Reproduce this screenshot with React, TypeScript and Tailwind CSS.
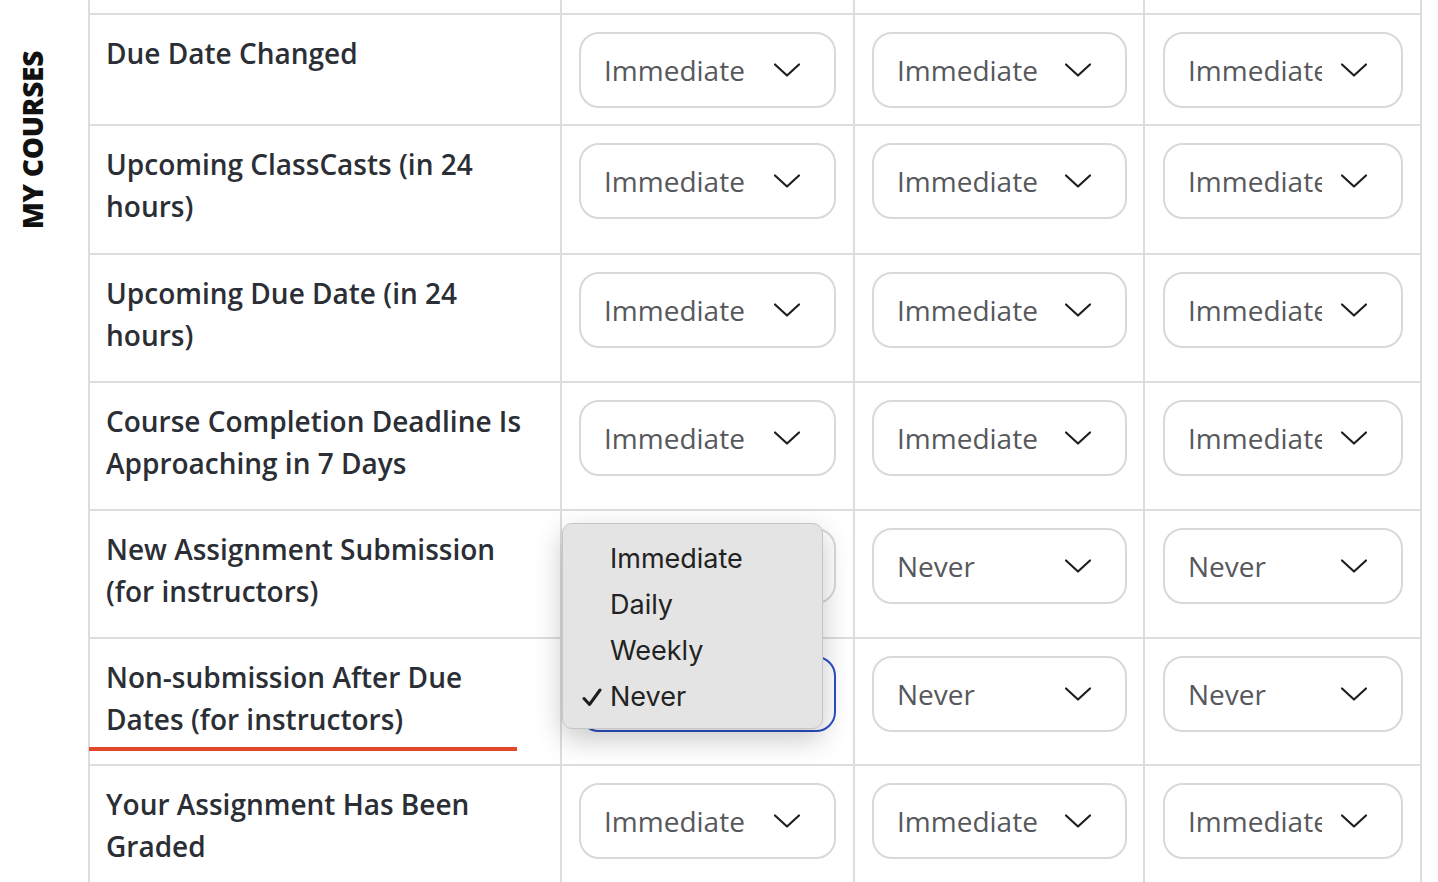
import { ReactNode } from 'react'

type Row = {
  label: string[]
  height: string
  values: [string, string, string]
  underline?: boolean
  focused?: boolean
}

const rows: Row[] = [
  { label: ['Due Date Changed'], height: 'h-[111px]', values: ['Immediate', 'Immediate', 'Immediate'] },
  { label: ['Upcoming ClassCasts (in 24', 'hours)'], height: 'h-[129px]', values: ['Immediate', 'Immediate', 'Immediate'] },
  { label: ['Upcoming Due Date (in 24', 'hours)'], height: 'h-[128px]', values: ['Immediate', 'Immediate', 'Immediate'] },
  { label: ['Course Completion Deadline Is', 'Approaching in 7 Days'], height: 'h-[128px]', values: ['Immediate', 'Immediate', 'Immediate'] },
  { label: ['New Assignment Submission', '(for instructors)'], height: 'h-[128px]', values: ['Never', 'Never', 'Never'] },
  { label: ['Non-submission After Due', 'Dates (for instructors)'], height: 'h-[127px]', values: ['Never', 'Never', 'Never'], underline: true, focused: true },
  { label: ['Your Assignment Has Been', 'Graded'], height: 'h-[128px]', values: ['Immediate', 'Immediate', 'Immediate'] },
]

const selectWidths = ['w-[257px]', 'w-[255px]', 'w-[240px]']
const cellPad = ['pl-[17px]', 'pl-[17px]', 'pl-[18px]']

function Chevron() {
  return (
    <svg width="26" height="14" viewBox="0 0 26 14" fill="none" className="shrink-0">
      <path d="M1 1.5 L13 12.5 L25 1.5" stroke="#1f1f1f" strokeWidth="2.2" strokeLinecap="round" strokeLinejoin="round" />
    </svg>
  )
}

function Select({ value, width, focused }: { value: string; width: string; focused?: boolean }) {
  return (
    <div
      className={`${width} h-[76px] flex items-center pl-[23px] pr-[34px] rounded-[20px] border-2 bg-white ${
        focused ? 'border-[#2c4fc4]' : 'border-[#d8d8dd]'
      }`}
    >
      <span className="flex-1 min-w-0 overflow-hidden whitespace-nowrap text-[28px] text-[#56585c] leading-[40px]">
        {value}
      </span>
      <span className="ml-[19px] flex">
        <Chevron />
      </span>
    </div>
  )
}

function Cell({ children, className = '' }: { children?: ReactNode; className?: string }) {
  return <div className={`border-r-2 border-b-2 border-[#dddddd] ${className}`}>{children}</div>
}

function CheckMark() {
  return (
    <svg width="20" height="19" viewBox="0 0 20 19" fill="none">
      <path d="M2 10.5 L7.5 16.5 L18 2" stroke="#1e1e1e" strokeWidth="3" strokeLinecap="round" strokeLinejoin="round" />
    </svg>
  )
}

function Menu() {
  const items = ['Immediate', 'Daily', 'Weekly', 'Never']
  return (
    <div className="absolute left-[562px] top-[523px] w-[261px] h-[206px] rounded-[10px] border border-[#c6c6c6] bg-[#e4e4e4] pt-[12px] shadow-[0_10px_28px_rgba(0,0,0,0.22)] font-['Inter',sans-serif]">
      {items.map((item) => (
        <div key={item} className="h-[46px] flex items-center text-[27px] text-[#222222]">
          <span className="w-[47px] flex justify-end pr-[8px]">{item === 'Never' && <CheckMark />}</span>
          <span>{item}</span>
        </div>
      ))}
    </div>
  )
}

export default function App() {
  return (
    <div className="relative h-[882px] w-[1438px] overflow-hidden bg-white flex font-['Open_Sans',sans-serif]">
      <div className="w-[88px] shrink-0 flex justify-center pr-[24px] pt-[51px]">
        <div className="[writing-mode:vertical-rl] rotate-180 text-[28px] font-extrabold tracking-[-0.3px] text-[#111111] leading-none h-fit">
          MY COURSES
        </div>
      </div>

      <div className="w-[1334px] shrink-0 border-l-2 border-[#dddddd] self-start">
        <div className="grid grid-cols-[472px_293px_290px_277px]">
          <Cell className="h-[15px]" />
          <Cell className="h-[15px]" />
          <Cell className="h-[15px]" />
          <Cell className="h-[15px]" />

          {rows.map((row) => (
            <div key={row.label.join(' ')} className="contents">
              <Cell className={`${row.height} flex flex-col`}>
                <div className="pl-[16px] pt-[17px] text-[28px] font-semibold leading-[42px] text-[#2b2e35]">
                  {row.label.map((line) => (
                    <div key={line} className="whitespace-nowrap">
                      {line}
                    </div>
                  ))}
                </div>
                {row.underline && <div className="mt-[7px] h-[4px] w-[428px] -ml-[1px] bg-[#e5472d]" />}
              </Cell>
              {row.values.map((v, i) => (
                <Cell key={i} className={`${row.height} ${cellPad[i]} pt-[17px]`}>
                  <Select value={v} width={selectWidths[i]} focused={row.focused && i === 0} />
                </Cell>
              ))}
            </div>
          ))}
        </div>
      </div>

      <Menu />
    </div>
  )
}
